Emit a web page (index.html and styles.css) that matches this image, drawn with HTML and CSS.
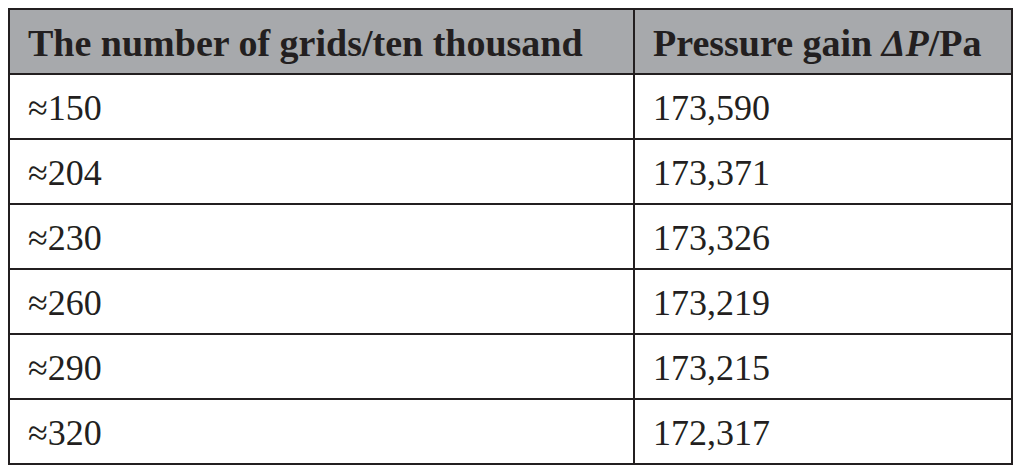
FILE: index.html
```html
<!DOCTYPE html>
<html lang="en">
<head>
    <meta charset="UTF-8">
    <meta name="viewport" content="width=device-width, initial-scale=1.0">
    <title>Grid Independence</title>
    <link rel="stylesheet" href="styles.css">
</head>
<body>
    <table class="grid-table">
        <colgroup>
            <col class="col-grids">
            <col class="col-pressure">
        </colgroup>
        <thead>
            <tr>
                <th>The number of grids/ten thousand</th>
                <th>Pressure gain <em>&Delta;P</em>/Pa</th>
            </tr>
        </thead>
        <tbody>
            <tr><td>&asymp;150</td><td>173,590</td></tr>
            <tr><td>&asymp;204</td><td>173,371</td></tr>
            <tr><td>&asymp;230</td><td>173,326</td></tr>
            <tr><td>&asymp;260</td><td>173,219</td></tr>
            <tr><td>&asymp;290</td><td>173,215</td></tr>
            <tr><td>&asymp;320</td><td>172,317</td></tr>
        </tbody>
    </table>
</body>
</html>
```

FILE: styles.css
```css
body {
    margin: 0;
    padding: 8px 0 0 8px;
    background: #ffffff;
    font-family: "Liberation Serif", "Times New Roman", serif;
    color: #231f20;
}

.grid-table {
    border-collapse: collapse;
    table-layout: fixed;
    width: 1005px;
}

.col-grids {
    width: 625px;
}

.grid-table th,
.grid-table td {
    border: 2px solid #231f20;
    height: 61px;
    padding: 2px 0 0 18px;
    text-align: left;
    vertical-align: middle;
    white-space: nowrap;
}

.grid-table th {
    background: #a7a9ac;
    font-size: 38px;
    font-weight: bold;
}

.grid-table th em {
    font-style: italic;
}

.grid-table td {
    font-size: 36px;
    font-weight: normal;
}
```
